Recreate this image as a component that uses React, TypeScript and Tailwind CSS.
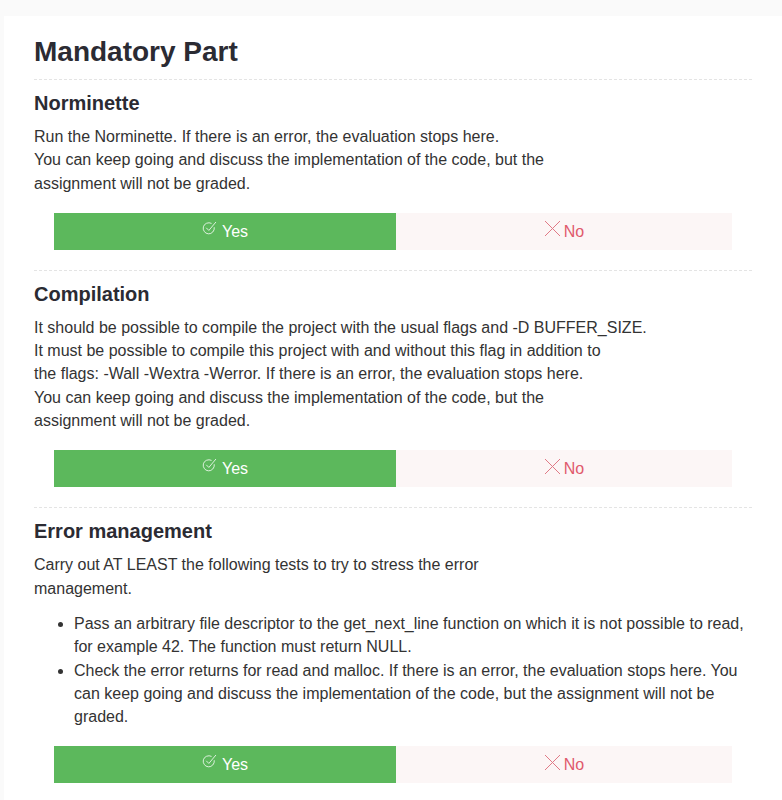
import React from "react";

function CheckIcon() {
  return (
    <svg width="15" height="15" viewBox="0 0 14 14" fill="none" className="mb-[6px]">
      <path d="M11.5 6.2A5.2 5.2 0 1 1 8.6 2.1" stroke="#e8f5e8" strokeWidth="0.85" strokeLinecap="round" />
      <path d="M4.2 6.6L6.4 8.8L12.8 1.2" stroke="#e8f5e8" strokeWidth="0.85" strokeLinecap="round" strokeLinejoin="round" />
    </svg>
  );
}

function XIcon() {
  return (
    <svg width="17" height="17" viewBox="0 0 17 17" fill="none" className="mb-[5px]">
      <path d="M1 1L16 16M16 1L1 16" stroke="#e07a86" strokeWidth="1" />
    </svg>
  );
}

function Buttons() {
  return (
    <div className="mx-5 mt-[18px] flex h-[37px]">
      <div className="flex w-[342px] items-center justify-center gap-[5px] bg-[#5cb85c] text-[16px] text-white">
        <CheckIcon />
        <span>Yes</span>
      </div>
      <div className="flex flex-1 items-center justify-center gap-[3px] bg-[#fcf6f6] text-[16px] text-[#e05a6c]">
        <XIcon />
        <span>No</span>
      </div>
    </div>
  );
}

function Divider() {
  return <div className="border-t border-dashed border-[#e4e4e4]" />;
}

export default function App() {
  return (
    <div
      className="min-h-[800px] bg-[#fafafa] pt-4 pl-1"
      style={{ fontFamily: '"Liberation Sans", Arial, sans-serif' }}
    >
      <div className="bg-white pl-[30px] pr-[30px] pb-10 text-[16px] leading-[23.3px] text-[#333]">
        <h1 className="pt-[18px] pb-[9px] text-[28px] font-bold leading-[36px] text-[#2b2b33]">Mandatory Part</h1>
        <Divider />

        <h2 className="mt-[10px] text-[20px] font-bold leading-[26px] text-[#2b2b33]">Norminette</h2>
        <p className="mt-[9px]">
          Run the Norminette. If there is an error, the evaluation stops here.
          <br />
          You can keep going and discuss the implementation of the code, but the
          <br />
          assignment will not be graded.
        </p>
        <Buttons />
        <div className="mt-[20px]" />
        <Divider />

        <h2 className="mt-[10px] text-[20px] font-bold leading-[26px] text-[#2b2b33]">Compilation</h2>
        <p className="mt-[9px]">
          It should be possible to compile the project with the usual flags and -D BUFFER_SIZE.
          <br />
          It must be possible to compile this project with and without this flag in addition to
          <br />
          the flags: -Wall -Wextra -Werror. If there is an error, the evaluation stops here.
          <br />
          You can keep going and discuss the implementation of the code, but the
          <br />
          assignment will not be graded.
        </p>
        <Buttons />
        <div className="mt-[20px]" />
        <Divider />

        <h2 className="mt-[10px] text-[20px] font-bold leading-[26px] text-[#2b2b33]">Error management</h2>
        <p className="mt-[9px]">
          Carry out AT LEAST the following tests to try to stress the error
          <br />
          management.
        </p>
        <ul className="mt-[12px] list-disc pl-[40px]">
          <li>
            Pass an arbitrary file descriptor to the get_next_line function on which it is not possible to read,
            for example 42. The function must return NULL.
          </li>
          <li>
            Check the error returns for read and malloc. If there is an error, the evaluation stops here. You
            can keep going and discuss the implementation of the code, but the assignment will not be graded.
          </li>
        </ul>
        <Buttons />
      </div>
    </div>
  );
}
